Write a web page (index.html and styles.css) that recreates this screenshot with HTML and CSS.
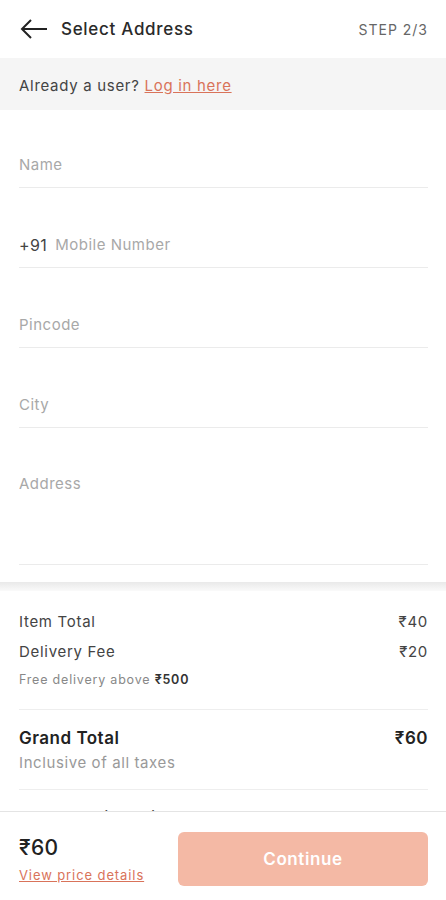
FILE: index.html
```html
<!DOCTYPE html>
<html lang="en">

<head>
    <meta charset="UTF-8">
    <meta name="viewport" content="width=device-width, initial-scale=1.0">
    <title>Select Address</title>
    <link rel="stylesheet" href="styles.css">
</head>

<body>
    <div class="header">
        <svg class="back" width="28" height="20" viewBox="0 0 28 20">
            <path d="M27 10H2M11 1L2 10l9 9" fill="none" stroke="#222" stroke-width="2" />
        </svg>
        <h1>Select Address</h1>
        <span class="step">STEP 2/3</span>
    </div>

    <div class="login-bar">
        <p>Already a user? <a href="#">Log in here</a></p>
    </div>

    <div class="form">
        <div class="field"><input type="text" placeholder="Name"></div>
        <div class="field">
            <span class="prefix">+91</span>
            <input type="tel" placeholder="Mobile Number">
        </div>
        <div class="field"><input type="text" placeholder="Pincode"></div>
        <div class="field"><input type="text" placeholder="City"></div>
        <div class="field field-tall"><textarea placeholder="Address"></textarea></div>
    </div>

    <div class="divider"></div>

    <div class="summary">
        <div class="row">
            <span>Item Total</span>
            <span>₹40</span>
        </div>
        <div class="row">
            <span>Delivery Fee</span>
            <span>₹20</span>
        </div>
        <p class="note">Free delivery above <b>₹500</b></p>

        <div class="grand">
            <div class="row row-bold">
                <span>Grand Total</span>
                <span>₹60</span>
            </div>
            <p class="taxes">Inclusive of all taxes</p>
        </div>

        <p class="eta">Approx. delivery time: 1-4 hours</p>
    </div>

    <div class="footer">
        <div class="total">
            <div class="amount">₹60</div>
            <a href="#">View price details</a>
        </div>
        <button>Continue</button>
    </div>
</body>

</html>
```

FILE: styles.css
```css
body {
    font-family: Inter, "Noto Sans", sans-serif;
    letter-spacing: 0.4px;
    margin: 0;
    background: #ffffff;
    color: #333;
}

.header {
    display: flex;
    align-items: center;
    height: 58px;
    padding: 0 18px 0 20px;
}

.back {
    margin-right: 13px;
}

h1 {
    flex: 1;
    margin: 0;
    font-size: 17px;
    font-weight: 500;
    letter-spacing: 0.7px;
    color: #2a2a2a;
}

.step {
    font-size: 14px;
    letter-spacing: 1px;
    color: #666;
}

.login-bar {
    background: #f5f5f5;
    height: 52px;
    display: flex;
    align-items: center;
    padding: 2px 19px 0;
    box-sizing: border-box;
}

.login-bar p {
    margin: 0;
    font-size: 15px;
    letter-spacing: 0.7px;
    color: #444;
}

.login-bar a,
.total a {
    color: #d9735a;
}

.form {
    padding: 0 18px 0 19px;
}

.field {
    display: flex;
    align-items: flex-end;
    height: 78px;
    padding-bottom: 13px;
    box-sizing: border-box;
    border-bottom: 1px solid #ebebeb;
}

.field:not(:first-child) {
    height: 80px;
}

.field input,
.field textarea {
    flex: 1;
    border: none;
    outline: none;
    padding: 0;
    font-family: inherit;
    font-size: 15px;
    line-height: 18px;
    letter-spacing: 0.5px;
    color: #333;
    background: transparent;
}

::placeholder {
    color: #a8a8a8;
}

.prefix {
    font-size: 16px;
    line-height: 18px;
    color: #444;
    margin-right: 8px;
}

.field.field-tall {
    height: 137px;
    align-items: flex-start;
    padding: 47px 0 0;
    margin-bottom: 17px;
}

.field textarea {
    resize: none;
    height: 40px;
}

.divider {
    height: 9px;
    background: linear-gradient(#e9e9e9, #fafafa);
}

.summary {
    padding: 22px 18px 40px 19px;
}

.row {
    display: flex;
    justify-content: space-between;
    font-size: 15px;
    line-height: 18px;
    letter-spacing: 0.7px;
    color: #444;
    margin-bottom: 12px;
}

.note {
    margin: -1px 0 0;
    font-size: 12.5px;
    line-height: 16px;
    letter-spacing: 0.8px;
    color: #888;
}

.note b {
    color: #333;
    font-weight: 600;
}

.grand {
    border-top: 1px solid #eeeeee;
    border-bottom: 1px solid #eeeeee;
    margin-top: 21px;
    padding: 18px 0 17px;
}

.row-bold {
    font-size: 17px;
    line-height: 20px;
    font-weight: 600;
    letter-spacing: 0.5px;
    color: #222;
    margin-bottom: 6px;
}

.taxes {
    margin: 0;
    font-size: 15px;
    line-height: 18px;
    letter-spacing: 0.6px;
    color: #999;
}

.eta {
    margin: 17px 0 0;
    font-size: 15px;
    color: #444;
}

.footer {
    position: fixed;
    left: 0;
    right: 0;
    bottom: 0;
    height: 89px;
    border-top: 1px solid #e4e4e4;
    background: #ffffff;
    display: flex;
    align-items: center;
    padding: 6px 18px 0 19px;
    box-sizing: border-box;
}

.total {
    flex: 1;
}

.amount {
    font-size: 21px;
    font-weight: 500;
    color: #222;
    margin-bottom: 4px;
}

.total a {
    font-size: 13px;
    letter-spacing: 0.9px;
}

button {
    width: 250px;
    height: 54px;
    border: none;
    border-radius: 6px;
    background: #f4b9a5;
    color: #ffffff;
    font-family: inherit;
    font-size: 17px;
    font-weight: 600;
    letter-spacing: 0.6px;
}
```
